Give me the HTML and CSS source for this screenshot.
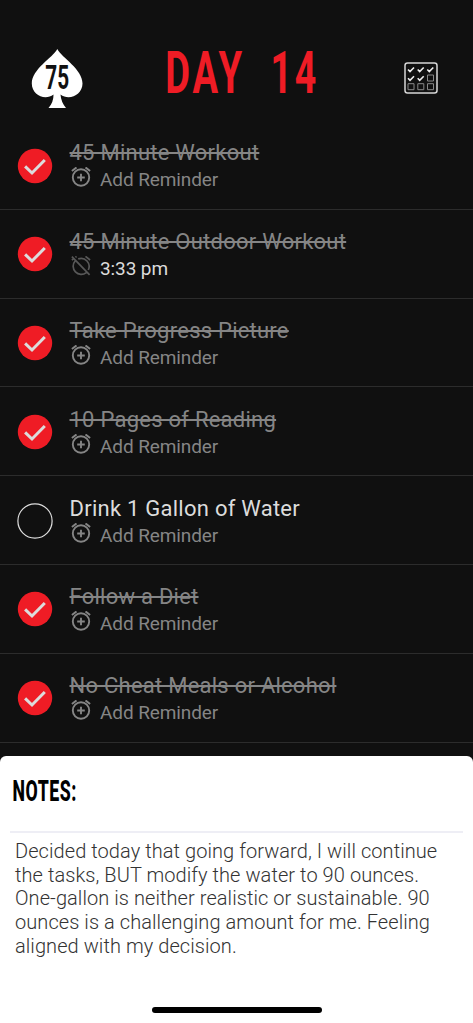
FILE: index.html
```html
<!DOCTYPE html>
<html lang="en">
<head>
<meta charset="utf-8">
<meta name="viewport" content="width=device-width, initial-scale=1">
<title>Day 14</title>
<link rel="stylesheet" href="styles.css">
</head>
<body>
<svg class="defs" width="0" height="0" aria-hidden="true">
  <symbol id="check" viewBox="0 0 36 36">
    <circle cx="18" cy="18" r="17.2" fill="#ef1c25"/>
    <path d="M8.1 18.3 15 25 27.8 12" fill="none" stroke="#dcdcdc" stroke-width="3"/>
  </symbol>
  <symbol id="open" viewBox="0 0 36 36">
    <circle cx="18" cy="18" r="17.1" fill="none" stroke="#dedede" stroke-width="1.2"/>
  </symbol>
  <symbol id="alarm" viewBox="0 0 20 20">
    <g fill="none" stroke="#858585" stroke-width="1.9">
      <circle cx="10" cy="10.5" r="8.2"/>
      <path d="M.9 4 5.5.4M19.1 4 14.5.4M10 6.700v7.600M6.200 10.500h7.600"/>
    </g>
  </symbol>
  <symbol id="alarm-off" viewBox="0 0 20 20">
    <g fill="none" stroke="#585858" stroke-width="1.700">
      <path d="M7.200 2.900A8.100 8.100 0 0 1 17.300 14M15.300 16.600A8.100 8.100 0 0 1 4.100 5M.9.700 18.600 18.800M.9 4.100 3.300 2.200M4.500 1.300 5.500.400M14.500.4 19.100 4"/>
    </g>
  </symbol>
</svg>
<div class="app">
  <header class="header">
    <svg class="logo" viewBox="0 0 52 60" aria-label="75">
      <path d="M26.300 1C31 10 51.500 21 51.500 35.500 51.500 47 38 53 29.500 46.500Q30 54 35 60H17.500Q22.700 54 22.500 46.500C14 53 .8 47 .8 35.500.8 21 21.500 10 26.300 1Z" fill="#fff"/>
      <text class="logo-text" transform="translate(14.300 41.300) scale(.63 1)">75</text>
    </svg>
    <svg class="day" viewBox="0 0 160 60" aria-label="Day 14">
      <text class="day-text" transform="translate(2.200 50) scale(.64 1)">DAY</text>
      <text class="day-text" transform="translate(107.500 50) scale(.63 1)">14</text>
    </svg>
    <svg class="calendar" viewBox="0 0 34 32">
      <rect x="1" y="1" width="32" height="30" rx="2.500" fill="none" stroke="#d6d6d6" stroke-width="1.500"/>
      <g fill="none" stroke="#eee" stroke-width="1.600">
        <path d="m4 7.500 2 2L10 5.500M13.700 7.500l2 2 4-4M23.300 7.500l2 2 4-4M4 16.300l2 2 4-4M13.700 16.300l2 2 4-4"/>
      </g>
      <path d="M23.500 13h6v6h-6zM4 21.700h6v6H4zM13.800 21.700h6v6h-6zM23.500 21.700h6v6h-6z" fill="none" stroke="#888"/>
    </svg>
  </header>
  <main class="tasks">
    <section class="task done"><svg class="mark"><use href="#check"/></svg><div class="body"><h2 class="title"><span class="name">45 Minute Workout</span></h2><div class="reminder"><svg class="bell"><use href="#alarm"/></svg><span>Add Reminder</span></div></div></section>
    <section class="task done"><svg class="mark"><use href="#check"/></svg><div class="body"><h2 class="title"><span class="name">45 Minute Outdoor Workout</span></h2><div class="reminder set"><svg class="bell"><use href="#alarm-off"/></svg><span>3:33 pm</span></div></div></section>
    <section class="task done"><svg class="mark"><use href="#check"/></svg><div class="body"><h2 class="title"><span class="name">Take Progress Picture</span></h2><div class="reminder"><svg class="bell"><use href="#alarm"/></svg><span>Add Reminder</span></div></div></section>
    <section class="task done"><svg class="mark"><use href="#check"/></svg><div class="body"><h2 class="title"><span class="name">10 Pages of Reading</span></h2><div class="reminder"><svg class="bell"><use href="#alarm"/></svg><span>Add Reminder</span></div></div></section>
    <section class="task"><svg class="mark"><use href="#open"/></svg><div class="body"><h2 class="title"><span class="name">Drink 1 Gallon of Water</span></h2><div class="reminder"><svg class="bell"><use href="#alarm"/></svg><span>Add Reminder</span></div></div></section>
    <section class="task done"><svg class="mark"><use href="#check"/></svg><div class="body"><h2 class="title"><span class="name">Follow a Diet</span></h2><div class="reminder"><svg class="bell"><use href="#alarm"/></svg><span>Add Reminder</span></div></div></section>
    <section class="task done"><svg class="mark"><use href="#check"/></svg><div class="body"><h2 class="title"><span class="name">No Cheat Meals or Alcohol</span></h2><div class="reminder"><svg class="bell"><use href="#alarm"/></svg><span>Add Reminder</span></div></div></section>
  </main>
  <section class="notes">
    <h2 class="notes-head"><svg class="notes-svg" viewBox="0 0 70 30"><text class="notes-title" transform="translate(.6 25.300) scale(.59 1)">NOTES:</text></svg></h2>
    <p class="notes-text">Decided today that going forward, I will continue<br>the tasks, BUT modify the water to 90 ounces.<br>One-gallon is neither realistic or sustainable. 90<br>ounces is a challenging amount for me. Feeling<br>aligned with my decision.</p>
    <div class="home-bar"></div>
  </section>
</div>
</body>
</html>
```
FILE: styles.css
```css
* { box-sizing: border-box; }
body {
  margin: 0;
  background: #101010;
  font-family: Roboto, "Liberation Sans", sans-serif;
}
svg { display: block; flex: none; overflow: visible; }
.defs { position: absolute; }
.app {
  width: 473px;
  height: 1023px;
  display: flex;
  flex-direction: column;
  overflow: hidden;
}
.header {
  height: 121px;
  flex: none;
  display: flex;
  align-items: flex-start;
  padding: 43px 35px 0 31px;
}
.logo { width: 52px; height: 60px; margin-top: 5px; }
.logo-text { font-size: 33px; font-weight: 700; fill: #111; }
.day { width: 160px; height: 60px; margin-left: 80px; }
.day-text { font-size: 59.500px; font-weight: 700; letter-spacing: 4.500px; fill: #ef1c25; }
.calendar { width: 34px; height: 32px; margin: 19px 0 0 auto; }
.tasks { flex: none; height: 635px; overflow: hidden; }
.task {
  height: 88.800px;
  display: flex;
  padding: 26.500px 0 0 17px;
  border-bottom: 1px solid #2c2c2c;
}
.mark { width: 36px; height: 36px; }
.body { margin: -8.200px 0 0 16.500px; }
.title {
  margin: 0;
  font-size: 22px;
  line-height: 28px;
  font-weight: 400;
  letter-spacing: .25px;
  color: #dcdcdc;
  white-space: nowrap;
}
.done .name {
  color: #858585;
  text-decoration: line-through;
  text-decoration-thickness: 1.500px;
}
.reminder {
  display: flex;
  gap: 9px;
  padding-left: 1.500px;
  font-size: 19px;
  line-height: 26.500px;
  letter-spacing: -.1px;
  color: #858585;
}
.set { color: #dcdcdc; }
.bell { width: 20px; height: 20px; }
.notes {
  flex: 1;
  display: flex;
  flex-direction: column;
  background: #fff;
  border-radius: 6px 6px 0 0;
}
.notes-head {
  margin: 0 10px;
  height: 77px;
  padding: 20px 0 0 2px;
  border-bottom: 2px solid #eeeef5;
}
.notes-svg { width: 70px; height: 30px; }
.notes-title { font-size: 30px; font-weight: 800; letter-spacing: .900px; fill: #000; }
.notes-text {
  margin: 7px 0 0 15px;
  font-size: 20px;
  line-height: 23.700px;
  font-weight: 300;
  letter-spacing: .07px;
  color: #333;
  white-space: nowrap;
}
.home-bar {
  width: 170px;
  height: 6px;
  margin: auto auto 10px;
  border-radius: 3px;
  background: #000;
}
```
